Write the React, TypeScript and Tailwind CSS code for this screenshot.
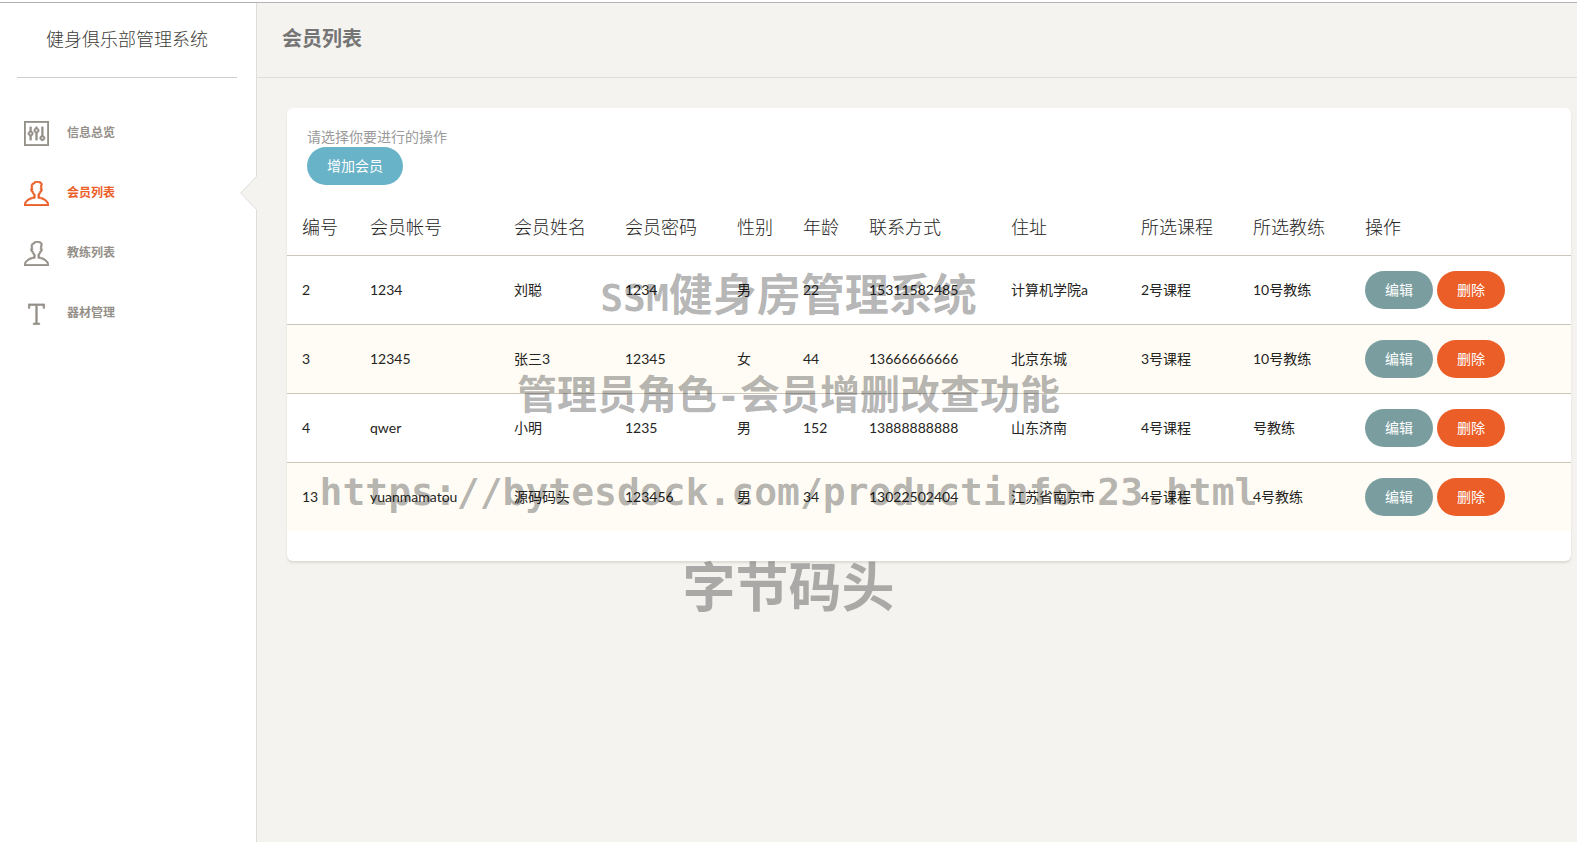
import React, { useState } from 'react';
import { TfiPanel, TfiUser, TfiText } from 'react-icons/tfi';

const menu = [
    { name: '信息总览', Icon: TfiPanel },
    { name: '会员列表', Icon: TfiUser },
    { name: '教练列表', Icon: TfiUser },
    { name: '器材管理', Icon: TfiText },
];

const columns = [
    { title: '编号', width: 'w-[68px]' },
    { title: '会员帐号', width: 'w-36' },
    { title: '会员姓名', width: 'w-[111px]' },
    { title: '会员密码', width: 'w-28' },
    { title: '性别', width: 'w-[66px]' },
    { title: '年龄', width: 'w-[66px]' },
    { title: '联系方式', width: 'w-[142px]' },
    { title: '住址', width: 'w-[130px]' },
    { title: '所选课程', width: 'w-28' },
    { title: '所选教练', width: 'w-28' },
    { title: '操作', width: '' },
];

const initialMembers = [
    ['2', '1234', '刘聪', '1234', '男', '22', '15311582485', '计算机学院a', '2号课程', '10号教练'],
    ['3', '12345', '张三3', '12345', '女', '44', '13666666666', '北京东城', '3号课程', '10号教练'],
    ['4', 'qwer', '小明', '1235', '男', '152', '13888888888', '山东济南', '4号课程', '号教练'],
    ['13', 'yuanmamatou', '源码码头', '123456', '男', '34', '13022502404', '江苏省南京市', '4号课程', '4号教练'],
];

const Sidebar: React.FC = () => {
    const [active, setActive] = useState('会员列表');

    return (
        <aside className="w-[257px] shrink-0 bg-white border-r border-[#dddddd]">
            <div className="ml-[17px] mr-[19px] h-[75px] border-b border-[#cfcfca] pt-[22px] text-center text-lg leading-7 font-light text-[#403d39]">
                健身俱乐部管理系统
            </div>
            <nav className="pt-[25px]">
                {menu.map(({ name, Icon }) => (
                    <a
                        key={name}
                        href="#"
                        onClick={() => setActive(name)}
                        className={
                            'relative flex h-[60px] items-center gap-[18px] pl-6 text-xs font-bold ' +
                            (active === name ? 'text-[#eb5e28]' : 'text-[#949089]')
                        }
                    >
                        <Icon className="size-[25px] stroke-current stroke-[0.5]" />
                        {name}
                        {active === name && (
                            <svg className="absolute -right-px top-[13px]" width="17" height="34" viewBox="0 0 17 34">
                                <path d="M17 0 L0.7 17 L17 34 Z" fill="#f4f3ef" />
                                <path d="M16.5 0.5 L0.7 17 L16.5 33.5" fill="none" stroke="#dddddd" />
                            </svg>
                        )}
                    </a>
                ))}
            </nav>
        </aside>
    );
};

const Watermark: React.FC = () => (
    <div className="pointer-events-none absolute inset-x-0 top-[242px] text-center font-['Noto_Sans_CJK_SC',sans-serif] font-bold whitespace-nowrap text-black/30">
        <p className="text-[44px] leading-[100px]">
            <span className="font-['DejaVu_Sans_Mono',monospace] text-[38px] leading-none">SSM</span>健身房管理系统
        </p>
        <p className="text-[40px] leading-[100px]">
            管理员角色<span className="font-['DejaVu_Sans_Mono',monospace] text-[38px] leading-none">-</span>会员增删改查功能
        </p>
        <p className="font-['DejaVu_Sans_Mono',monospace] text-[38px] leading-[100px]">https://bytesdock.com/productinfo-23.html</p>
        <p className="text-[53px] leading-[84px]">字节码头</p>
    </div>
);

const App: React.FC = () => {
    const [members, setMembers] = useState(initialMembers);

    const handleDelete = (id: string) => {
        setMembers(members.filter((m) => m[0] !== id));
    };

    return (
        <div className="relative min-h-screen flex flex-col bg-white pt-[2px] font-['Lato','Noto_Sans_CJK_SC',sans-serif] text-sm text-[#252422]">
            <div className="flex flex-1 border-t border-[#b3b3b7]">
                <Sidebar />
                <main className="min-w-0 flex-1 bg-[#f4f3ef]">
                    <header className="h-[75px] border-b border-[#dddddd] pl-[25px] pt-[19px]">
                        <h1 className="text-xl leading-8 font-bold text-[#757575]">会员列表</h1>
                    </header>
                    <section className="mt-[30px] ml-[30px] mr-[6px] rounded-md bg-white pb-[30px] shadow-[0_2px_2px_rgba(204,197,185,0.5)]">
                        <div className="px-5 pt-[19px]">
                            <p className="leading-5 text-[#9a9a9a]">请选择你要进行的操作</p>
                            <button className="h-[38px] rounded-[20px] bg-[#68b3c8] px-5 text-white">增加会员</button>
                        </div>
                        <table className="mt-[15px] w-full table-fixed text-left">
                            <thead>
                                <tr className="h-[55px] border-b border-[#ccc5b9]">
                                    {columns.map((c) => (
                                        <th key={c.title} className={'pl-[15px] text-lg font-light ' + c.width}>
                                            {c.title}
                                        </th>
                                    ))}
                                </tr>
                            </thead>
                            <tbody>
                                {members.map((m) => (
                                    <tr key={m[0]} className="h-[69px] border-b border-[#ccc5b9] last:border-b-0 even:bg-[#fffcf5]">
                                        {m.map((value, i) => (
                                            <td key={i} className="pl-[15px] whitespace-nowrap">{value}</td>
                                        ))}
                                        <td className="pl-[15px]">
                                            <div className="flex gap-1">
                                                <button className="h-[38px] rounded-[20px] bg-[#7a9e9f] px-5 text-white">编辑</button>
                                                <button
                                                    onClick={() => handleDelete(m[0])}
                                                    className="h-[38px] rounded-[20px] bg-[#eb5e28] px-5 text-white"
                                                >
                                                    删除
                                                </button>
                                            </div>
                                        </td>
                                    </tr>
                                ))}
                            </tbody>
                        </table>
                    </section>
                </main>
            </div>
            <Watermark />
        </div>
    );
};

export default App;
